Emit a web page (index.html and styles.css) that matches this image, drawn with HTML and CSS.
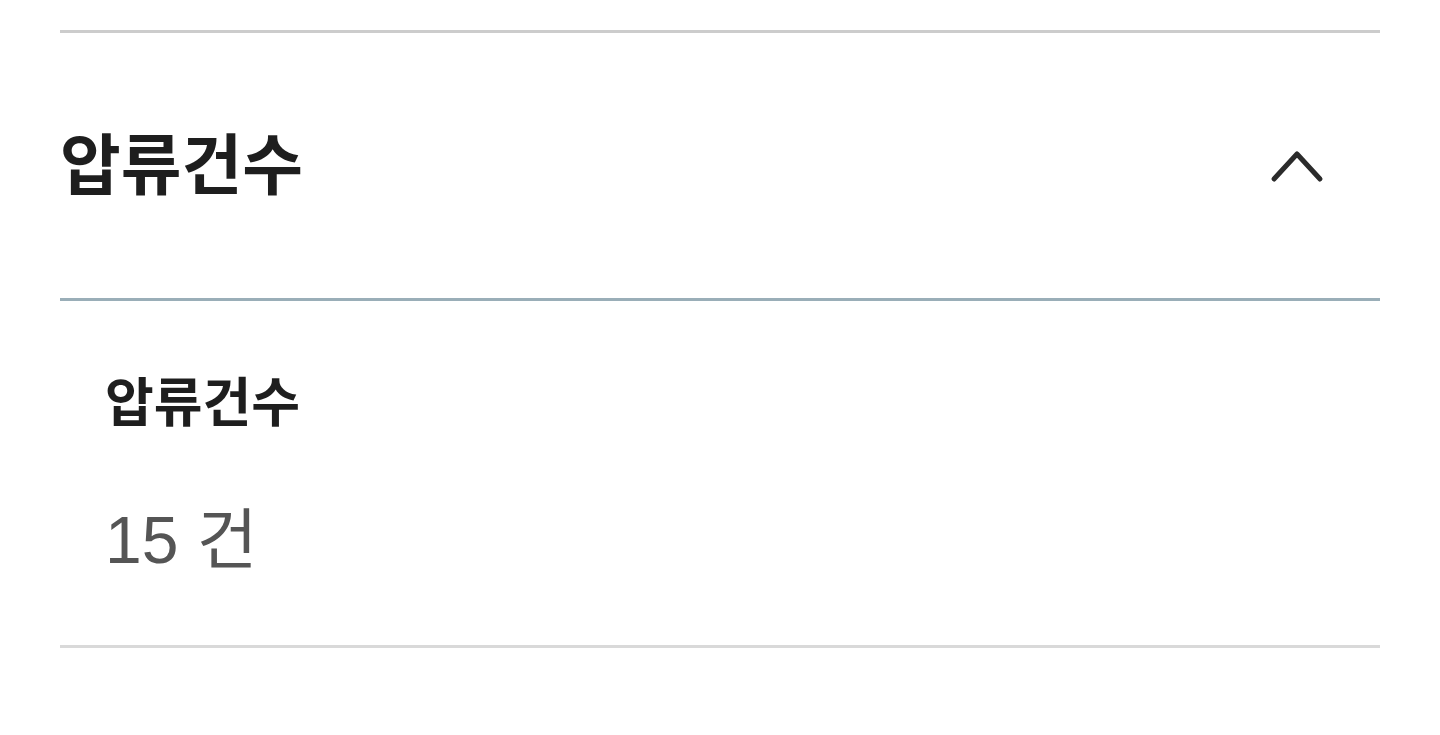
FILE: index.html
```html
<!DOCTYPE html>
<html lang="ko">
<head>
    <meta charset="UTF-8">
    <meta name="viewport" content="width=device-width, initial-scale=1.0">
    <title>압류건수</title>
    <link rel="stylesheet" href="styles.css">
</head>
<body>
    <div class="container">
        <div class="acordeao">
            <div class="acordeao-topo">
                <h2 class="acordeao-titulo">압류건수</h2>
                <svg class="seta" width="56" height="40" viewBox="0 0 56 40">
                    <polyline points="4,32 27,7 50,32" fill="none" stroke="#2b2b2b" stroke-width="5" stroke-linecap="round" stroke-linejoin="round"/>
                </svg>
            </div>
            <div class="acordeao-corpo">
                <div class="item-label">압류건수</div>
                <div class="item-valor">15 건</div>
            </div>
        </div>
    </div>
</body>
</html>
```

FILE: styles.css
```css
* {
    margin: 0;
    padding: 0;
    box-sizing: border-box;
}

body {
    font-family: 'Liberation Sans', 'Noto Sans CJK KR', sans-serif;
    background: #fff;
    color: #1e1e1e;
}

.container {
    padding: 30px 60px 0;
}

.acordeao {
    border-top: 3px solid #cccccc;
    border-bottom: 3px solid #d9d9d9;
}

.acordeao-topo {
    display: flex;
    align-items: center;
    justify-content: space-between;
    height: 268px;
    padding-right: 54px;
    padding-bottom: 12px;
    border-bottom: 3px solid #9aaeb8;
}

.acordeao-titulo {
    font-size: 66px;
    font-weight: 700;
    color: #1e1e1e;
}

.seta {
    display: block;
    margin-top: 14px;
}

.acordeao-corpo {
    padding: 63px 45px 65px;
}

.item-label {
    font-size: 53px;
    font-weight: 700;
    line-height: 80px;
}

.item-valor {
    margin-top: 56px;
    font-size: 66px;
    color: #555;
    line-height: 80px;
}
```
